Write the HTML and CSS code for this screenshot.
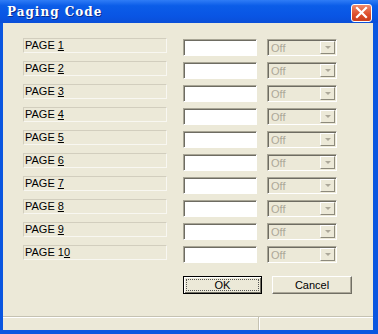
FILE: index.html
```html
<!DOCTYPE html>
<html lang="en">
<head>
  <meta charset="UTF-8">
  <title>Paging Code</title>
  <link rel="stylesheet" href="styles.css">
</head>
<body>
  <div class="window">
    <div class="titlebar">
      <span class="title">Paging Code</span>
      <span class="close">
        <svg width="13" height="13" viewBox="0 0 13 13">
          <path d="M2 2 L11 11 M11 2 L2 11" stroke="#fff" stroke-width="2.2" stroke-linecap="square"/>
        </svg>
      </span>
    </div>

    <div class="client">
      <div class="rows">
        <div class="row">
          <span class="label">PAGE <u>1</u></span>
          <span class="edit"></span>
          <span class="combo"><span class="combo-text">Off</span><span class="combo-btn"><span class="arrow"></span></span></span>
        </div>
        <div class="row">
          <span class="label">PAGE <u>2</u></span>
          <span class="edit"></span>
          <span class="combo"><span class="combo-text">Off</span><span class="combo-btn"><span class="arrow"></span></span></span>
        </div>
        <div class="row">
          <span class="label">PAGE <u>3</u></span>
          <span class="edit"></span>
          <span class="combo"><span class="combo-text">Off</span><span class="combo-btn"><span class="arrow"></span></span></span>
        </div>
        <div class="row">
          <span class="label">PAGE <u>4</u></span>
          <span class="edit"></span>
          <span class="combo"><span class="combo-text">Off</span><span class="combo-btn"><span class="arrow"></span></span></span>
        </div>
        <div class="row">
          <span class="label">PAGE <u>5</u></span>
          <span class="edit"></span>
          <span class="combo"><span class="combo-text">Off</span><span class="combo-btn"><span class="arrow"></span></span></span>
        </div>
        <div class="row">
          <span class="label">PAGE <u>6</u></span>
          <span class="edit"></span>
          <span class="combo"><span class="combo-text">Off</span><span class="combo-btn"><span class="arrow"></span></span></span>
        </div>
        <div class="row">
          <span class="label">PAGE <u>7</u></span>
          <span class="edit"></span>
          <span class="combo"><span class="combo-text">Off</span><span class="combo-btn"><span class="arrow"></span></span></span>
        </div>
        <div class="row">
          <span class="label">PAGE <u>8</u></span>
          <span class="edit"></span>
          <span class="combo"><span class="combo-text">Off</span><span class="combo-btn"><span class="arrow"></span></span></span>
        </div>
        <div class="row">
          <span class="label">PAGE <u>9</u></span>
          <span class="edit"></span>
          <span class="combo"><span class="combo-text">Off</span><span class="combo-btn"><span class="arrow"></span></span></span>
        </div>
        <div class="row">
          <span class="label">PAGE 1<u>0</u></span>
          <span class="edit"></span>
          <span class="combo"><span class="combo-text">Off</span><span class="combo-btn"><span class="arrow"></span></span></span>
        </div>
      </div>

      <div class="buttons">
        <button class="btn btn-default"><span class="focus">OK</span></button>
        <button class="btn">Cancel</button>
      </div>

      <div class="statusbar">
        <span class="pane pane-main"></span>
        <span class="pane"></span>
      </div>
    </div>
  </div>
</body>
</html>
```

FILE: styles.css
```css
body {
  margin: 0;
  width: 378px;
  height: 334px;
  overflow: hidden;
  font-family: Arial, "Liberation Sans", sans-serif;
  font-size: 11px;
}

.window {
  width: 378px;
  height: 334px;
  display: flex;
  flex-direction: column;
  background: #0a56e0;
}

.titlebar {
  height: 23px;
  display: flex;
  align-items: center;
  justify-content: space-between;
  padding: 0 6px 0 7px;
  background: linear-gradient(#2f7cf6 0%, #0b5de8 25%, #0955e4 70%, #0a4fd8 100%);
}

.title {
  font-family: "DejaVu Serif", serif;
  font-weight: bold;
  font-size: 12px;
  letter-spacing: 1px;
  color: #fff;
  text-shadow: 1px 1px #0a2a8a;
}

.close {
  width: 21px;
  height: 18px;
  margin-top: 2px;
  display: flex;
  align-items: center;
  justify-content: center;
  background: linear-gradient(#f08a6c, #dd4d2a 60%, #c83d1c);
  border: 1px solid #fff;
  border-radius: 3px;
  box-sizing: border-box;
}

.client {
  flex: 1;
  display: flex;
  flex-direction: column;
  background: #ece9d8;
  margin: 0 5px 4px 3px;
  padding-top: 15px;
}

.rows {
  display: flex;
  flex-direction: column;
  gap: 7px;
  padding-left: 20px;
}

.row {
  display: flex;
  align-items: flex-start;
  height: 16px;
}

.label {
  width: 144px;
  height: 15px;
  box-sizing: border-box;
  margin-right: 16px;
  padding-left: 1px;
  line-height: 13px;
  color: #000;
  border: 1px solid;
  border-color: #d2cebe #f8f7f1 #f8f7f1 #d2cebe;
}

.edit {
  width: 74px;
  height: 17px;
  box-sizing: border-box;
  margin-top: 1px;
  margin-right: 10px;
  background: #fff;
  border: 1px solid;
  border-color: #a8a595 #fff #fff #a8a595;
  box-shadow: inset 1px 1px #6e6c62;
}

.combo {
  width: 70px;
  height: 17px;
  box-sizing: border-box;
  margin-top: 1px;
  display: flex;
  border: 1px solid;
  border-color: #a8a595 #fff #fff #a8a595;
  box-shadow: inset 1px 1px #6e6c62;
  padding: 1px 1px 0 1px;
}

.combo-text {
  flex: 1;
  padding-left: 2px;
  line-height: 14px;
  color: #aca899;
}

.combo-btn {
  width: 15px;
  height: 13px;
  box-sizing: border-box;
  display: flex;
  align-items: center;
  justify-content: center;
  border: 1px solid;
  border-color: #fff #8d8a7c #8d8a7c #fff;
}

.arrow {
  width: 0;
  height: 0;
  border-left: 3px solid transparent;
  border-right: 3px solid transparent;
  border-top: 3px solid #aca899;
}

.buttons {
  display: flex;
  gap: 10px;
  padding-left: 180px;
  margin-top: 15px;
}

.btn {
  width: 80px;
  height: 18px;
  box-sizing: border-box;
  padding: 0;
  font-family: Arial, "Liberation Sans", sans-serif;
  font-size: 11px;
  color: #000;
  background: #ece9d8;
  border: 1px solid;
  border-color: #fff #716f64 #716f64 #fff;
  box-shadow: inset -1px -1px #aca899;
}

.btn-default {
  width: 79px;
  border: 1px solid #000;
  box-shadow: inset 1px 1px #fff, inset -1px -1px #716f64;
  display: flex;
  padding: 2px;
}

.focus {
  flex: 1;
  display: flex;
  align-items: center;
  justify-content: center;
  border: 1px dotted #555;
}

.statusbar {
  margin-top: auto;
  height: 13px;
  display: flex;
  border-top: 1px solid #c5c2b2;
  box-shadow: inset 0 1px #fff;
}

.pane {
  flex: 1;
}

.pane-main {
  flex: none;
  width: 255px;
  border-right: 1px solid #c5c2b2;
  box-shadow: 1px 0 #fff;
}
```
